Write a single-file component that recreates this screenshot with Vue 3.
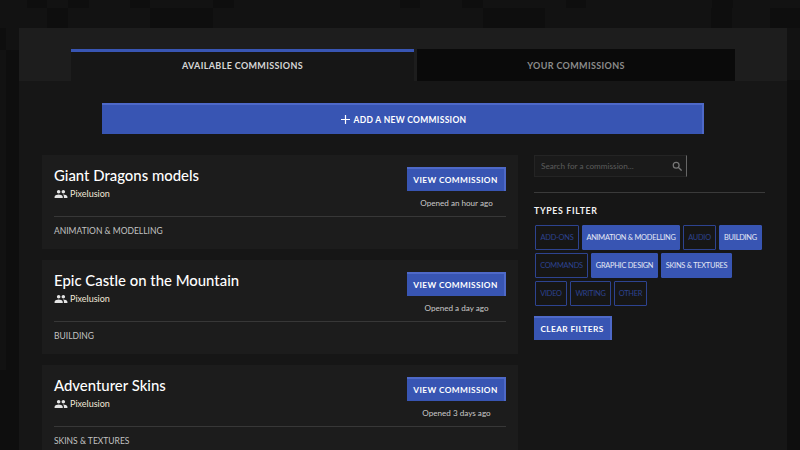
<script setup>
const tiles = [
  [27,0,20,8],[68,0,21,8],[130,0,20,8],[213,0,21,8],[47,8,21,20],[150,8,63,20],
  [0,28,6,22],[6,50,13,400],[0,370,19,80],[400,0,20,8],[462,0,21,8],[566,0,20,8],[712,0,21,8],
  [483,8,62,20],[711,8,21,20],[770,8,30,20],[787,80,13,370]
]
const cards = [
  { title: 'Giant Dragons models', opened: 'Opened an hour ago', type: 'ANIMATION & MODELLING' },
  { title: 'Epic Castle on the Mountain', opened: 'Opened a day ago', type: 'BUILDING' },
  { title: 'Adventurer Skins', opened: 'Opened 3 days ago', type: 'SKINS & TEXTURES' }
]
const filters = [
  { label: 'ADD-ONS', on: false, w: 44 }, { label: 'ANIMATION & MODELLING', on: true, w: 98 }, { label: 'AUDIO', on: false, w: 33 },
  { label: 'BUILDING', on: true, w: 43 }, { label: 'COMMANDS', on: false, w: 53 }, { label: 'GRAPHIC DESIGN', on: true, w: 67 },
  { label: 'SKINS & TEXTURES', on: true, w: 71 }, { label: 'VIDEO', on: false, w: 32 }, { label: 'WRITING', on: false, w: 41 },
  { label: 'OTHER', on: false, w: 33 }
]
</script>

<template>
  <div class="page">
    <svg class="bg" width="800" height="450" aria-hidden="true">
      <rect v-for="(t, i) in tiles" :key="i" :x="t[0]" :y="t[1]" :width="t[2]" :height="t[3]" fill="#0e0e0e" />
    </svg>
    <main class="panel">
      <nav class="tabs">
        <div class="tab active">AVAILABLE COMMISSIONS</div>
        <div class="tab other">YOUR COMMISSIONS</div>
      </nav>
      <section class="body">
        <button class="add">
          <svg width="9" height="9" viewBox="0 0 9 9"><path d="M4.5 0v9M0 4.5h9" stroke="#fff" stroke-width="1.2" /></svg>
          <span>ADD A NEW COMMISSION</span>
        </button>
        <div class="cols">
          <div class="list">
            <article v-for="c in cards" :key="c.title" class="card">
              <div class="top">
                <div>
                  <h2>{{ c.title }}</h2>
                  <div class="author">
                    <svg width="14" height="14" viewBox="0 0 24 24"><path fill="#e4e4e4" d="M16 11c1.66 0 2.99-1.34 2.99-3S17.66 5 16 5s-3 1.34-3 3 1.34 3 3 3zm-8 0c1.66 0 2.99-1.34 2.99-3S9.66 5 8 5 5 6.34 5 8s1.34 3 3 3zm0 2c-2.33 0-7 1.17-7 3.5V19h14v-2.5c0-2.33-4.67-3.5-7-3.5zm8 0c-.29 0-.62.02-.97.05 1.16.84 1.97 1.97 1.97 3.45V19h6v-2.5c0-2.33-4.67-3.5-7-3.5z"/></svg>
                    <span>Pixelusion</span>
                  </div>
                </div>
                <div class="actions">
                  <button class="btn">VIEW COMMISSION</button>
                  <div class="opened">{{ c.opened }}</div>
                </div>
              </div>
              <div class="type">{{ c.type }}</div>
            </article>
          </div>
          <aside class="side">
            <div class="search">
              <span>Search for a commission...</span>
              <svg width="10" height="10" viewBox="0 0 24 24"><circle cx="10" cy="10" r="7" fill="none" stroke="#777" stroke-width="3"/><path d="M15 15l8 8" stroke="#777" stroke-width="3"/></svg>
            </div>
            <hr />
            <h3>TYPES FILTER</h3>
            <div class="filters">
              <span v-for="f in filters" :key="f.label" class="chip" :class="{ on: f.on }" :style="{ width: f.w + 'px' }">{{ f.label }}</span>
            </div>
            <button class="btn clear">CLEAR FILTERS</button>
          </aside>
        </div>
      </section>
    </main>
  </div>
</template>

<style>
html, body { margin: 0; background: #111; }
</style>

<style scoped>
.page { position: relative; width: 800px; height: 450px; overflow: hidden; background: #121212; font-family: Lato, "Open Sans", sans-serif; }
.bg { position: absolute; left: 0; top: 0; }
.panel { position: relative; margin: 28px 13px 0 19px; height: 422px; background: #161616; }
.tabs { display: flex; gap: 3px; height: 53px; padding: 21px 52px 0; box-sizing: border-box; background: #1d1d1d; }
.tab { box-sizing: border-box; height: 32px; display: flex; align-items: center; justify-content: center; font-size: 9px; font-weight: 700; letter-spacing: 0.35px; }
.tab.active { width: 343px; background: #161616; border-top: 3px solid #3855b3; padding-bottom: 3px; color: #d6d6d6; }
.tab.other { width: 318px; background: #0a0a0a; color: #8c8c8c; }
.body { padding: 22px 0 0 23px; }
.add { display: flex; align-items: center; justify-content: center; gap: 4px; box-sizing: border-box; width: 602px; height: 31px; margin-left: 60px; padding: 0 0 0 3px; background: #3855b3; border: 0; border-top: 2px solid #4e69c8; border-right: 2px solid #4e69c8; color: #fff; font: 700 8.5px Lato, sans-serif; letter-spacing: 0.3px; }
.cols { display: flex; gap: 16px; margin-top: 21px; }
.list { width: 476px; display: flex; flex-direction: column; gap: 11px; flex: none; }
.card { background: #1c1c1c; padding: 12px 12px 0; height: 94px; box-sizing: border-box; flex: none; }
.top { display: flex; justify-content: space-between; height: 49px; border-bottom: 1px solid #373737; }
h2 { margin: 0; font-size: 14.9px; line-height: 17px; font-weight: 500; color: #fff; }
.author { display: flex; align-items: center; gap: 2px; margin-top: 3px; font-size: 9px; line-height: 14px; color: #f1e7d8; }
.actions { width: 99px; text-align: center; }
.btn { box-sizing: border-box; background: #3855b3; border: 0; border-top: 2px solid #4e69c8; border-right: 2px solid #4e69c8; color: #fff; font: 700 8.3px Lato, sans-serif; letter-spacing: 0.4px; padding: 0; }
.actions .btn { width: 99px; height: 24px; }
.opened { margin-top: 6px; font-size: 8.1px; line-height: 12px; color: #c9c9c9; }
.type { font-size: 8.5px; line-height: 13px; margin-top: 8px; color: #c2c2c2; }
.side { width: 231px; flex: none; }
.search { box-sizing: border-box; width: 153px; height: 22px; display: flex; align-items: center; justify-content: space-between; padding: 0 4px 0 6px; background: #1a1a1a; border: 1px solid #242424; border-right-color: #666; font-size: 8.2px; color: #5c5c5c; }
hr { border: 0; height: 1px; background: #3a3a3a; margin: 15px 0 0; }
h3 { margin: 11px 0 0; font-size: 8.8px; line-height: 13px; font-weight: 700; letter-spacing: 0.65px; color: #f2f2f2; }
.filters { display: flex; flex-wrap: wrap; gap: 3px; margin: 8px 0 0 1px; width: 230px; }
.chip { box-sizing: border-box; height: 25px; display: flex; align-items: center; justify-content: center; white-space: nowrap; font-size: 7.4px; letter-spacing: -0.25px; color: #2d4390; border: 1px solid #2d4390; border-radius: 1px; }
.chip.on { background: #3855b3; border-color: #3855b3; color: #e4e8f5; }
.clear { display: block; width: 78px; height: 24px; margin-top: 10px; }
</style>
